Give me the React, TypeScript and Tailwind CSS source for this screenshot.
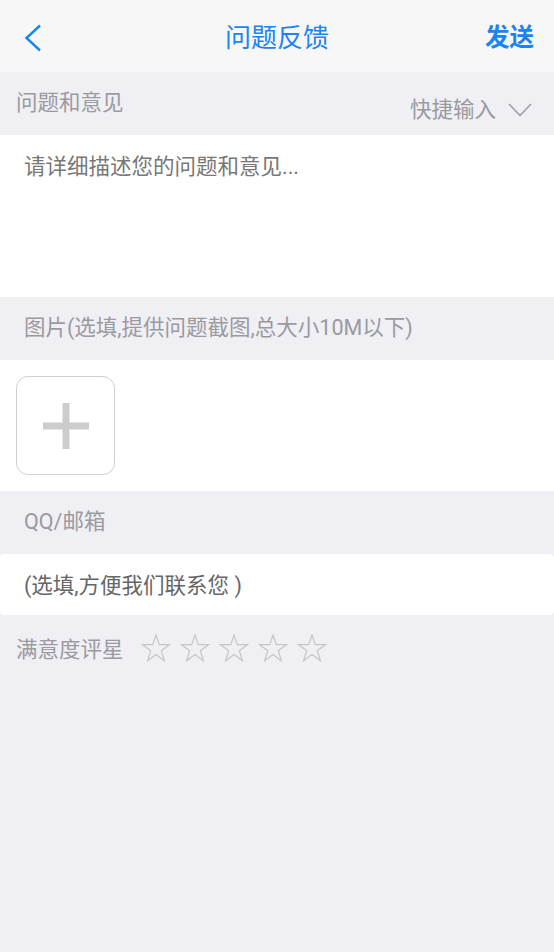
const FONT = "font-['Roboto','Noto_Sans_CJK_SC',sans-serif]";

function Star() {
  return (
    <svg viewBox="0 0 30 28" className="h-[28px] w-[30px]">
      <path
        d="M15 1 L18.3 10.6 L28.6 10.6 L20.3 16.8 L23.4 26.8 L15 20.6 L6.6 26.8 L9.7 16.8 L1.4 10.6 L11.7 10.6 Z"
        fill="none"
        stroke="#c6c6c8"
        strokeWidth="1.2"
      />
    </svg>
  );
}

function SectionLabel({ children }: { children: React.ReactNode }) {
  return (
    <div className="flex h-[63px] items-center px-6 text-[21.5px] text-[#9a9aa0]">
      {children}
    </div>
  );
}

export default function App() {
  return (
    <div className={`${FONT} flex min-h-[952px] w-[554px] flex-col bg-[#efeff4]`}>
      {/* Nav bar */}
      <div className="relative flex h-[72px] items-center justify-between bg-[#f7f7f7] pl-[24px] pr-[20px] pt-[4px]">
        <svg viewBox="0 0 18 28" className="h-[28px] w-[18px]">
          <path d="M16 1.5 L2.5 14 L16 26.5" fill="none" stroke="#1a84f4" strokeWidth="2.4" />
        </svg>
        <div className="absolute left-1/2 top-[22px] -translate-x-1/2 text-[26px] leading-8 text-[#1a84f4]">
          问题反馈
        </div>
        <span className="text-[24.5px] font-bold text-[#1a84f4]">发送</span>
      </div>

      {/* Problem & suggestions */}
      <div className="flex h-[63px] items-start justify-between pl-4 pr-[22px] text-[21.5px] text-[#9a9aa0]">
        <span className="pt-[15px]">问题和意见</span>
        <span className="flex items-center gap-[12px] pt-[22px]">
          快捷输入
          <svg viewBox="0 0 24 14" className="h-[14px] w-[24px]">
            <path d="M1 1 L12 12.5 L23 1" fill="none" stroke="#a0a0a6" strokeWidth="1.7" />
          </svg>
        </span>
      </div>
      <div className="h-[162px] bg-white px-6 pt-[16px] text-[21.5px] text-[#777]">
        请详细描述您的问题和意见...
      </div>

      {/* Pictures */}
      <SectionLabel>图片(选填,提供问题截图,总大小10M以下)</SectionLabel>
      <div className="h-[131px] bg-white pl-4 pt-4">
        <div className="flex h-[99px] w-[99px] items-center justify-center rounded-[12px] border border-[#cfcfcf]">
          <svg viewBox="0 0 46 46" className="h-[46px] w-[46px]">
            <rect x="19.5" y="0" width="7" height="46" fill="#cccccc" />
            <rect x="0" y="19.5" width="46" height="7" fill="#cccccc" />
          </svg>
        </div>
      </div>

      {/* Contact */}
      <SectionLabel>QQ/邮箱</SectionLabel>
      <div className="flex h-[61px] items-center rounded-[4px] bg-white px-6 pt-[3px] text-[21.5px] text-[#666]">
        (选填,方便我们联系您 )
      </div>

      {/* Rating */}
      <div className="flex h-[70px] items-center gap-[17px] pl-4 text-[21.5px] text-[#9a9aa0]">
        <span>满意度评星</span>
        <div className="mb-[5px] flex gap-[9px]">
          <Star />
          <Star />
          <Star />
          <Star />
          <Star />
        </div>
      </div>
    </div>
  );
}
